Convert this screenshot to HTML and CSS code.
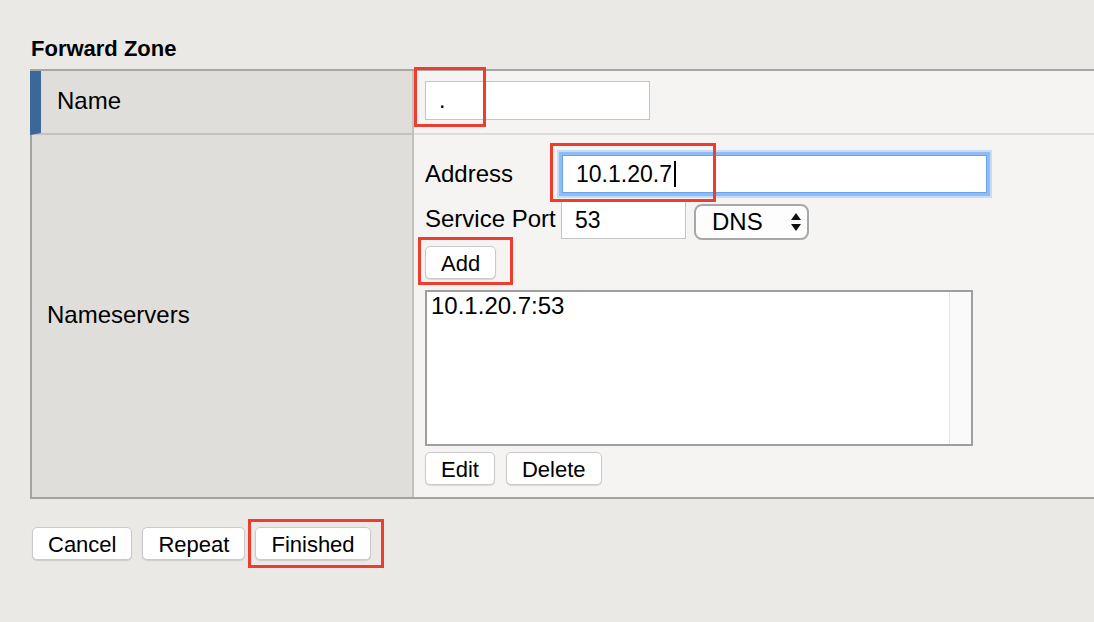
FILE: index.html
```html
<!DOCTYPE html>
<html>
<head>
<meta charset="utf-8">
<link rel="stylesheet" href="styles.css">
</head>
<body>
<div class="page">
  <h2 class="title">Forward Zone</h2>
  <div class="form-table">
    <div class="label-cell name-label">Name</div>
    <div class="value-cell name-value">
      <div class="text-input name-input">.</div>
    </div>
    <div class="label-cell ns-label">Nameservers</div>
    <div class="value-cell ns-value">
      <div class="field-row">
        <span class="field-label">Address</span>
        <div class="text-input addr-input">10.1.20.7<span class="caret"></span></div>
      </div>
      <div class="field-row port-row">
        <span class="field-label port-label">Service Port</span>
        <div class="text-input port-input">53</div>
        <div class="select">
          <span>DNS</span>
          <svg class="arrows" width="10" height="20" viewBox="0 0 10 20"><path d="M5 1 L10 8 L0 8 Z" fill="#111"/><path d="M0 12 L10 12 L5 19 Z" fill="#111"/></svg>
        </div>
      </div>
      <div class="btn-row add-row"><button class="btn">Add</button></div>
      <div class="listbox">
        <div class="list-items"><div class="list-item">10.1.20.7:53</div></div>
        <div class="gutter"></div>
      </div>
      <div class="btn-row edit-row">
        <button class="btn">Edit</button>
        <button class="btn">Delete</button>
      </div>
    </div>
  </div>
  <div class="actions">
    <button class="btn">Cancel</button>
    <button class="btn">Repeat</button>
    <button class="btn">Finished</button>
  </div>

  <div class="mark mark-name"></div>
  <div class="mark mark-addr"></div>
  <div class="mark mark-add"></div>
  <div class="mark mark-finished"></div>
</div>
</body>
</html>
```

FILE: styles.css
```css
html, body {
  margin: 0;
  padding: 0;
  background: #eae9e6;
}
body {
  font-family: "Liberation Sans", Arial, Helvetica, sans-serif;
  color: #000;
}
.page {
  position: relative;
  padding-left: 30px;
  min-height: 622px;
  box-sizing: border-box;
}
.title {
  margin: 0;
  padding-top: 37px;
  height: 32px;
  font-size: 22px;
  line-height: 24px;
  font-weight: bold;
  padding-left: 1px;
}
.form-table {
  display: grid;
  grid-template-columns: 384px 1fr;
  border-top: 2px solid #a6a6a6;
  border-bottom: 2px solid #a3a3a3;
}
.label-cell {
  background: #dfdedb;
  display: flex;
  align-items: center;
  font-size: 24px;
  border-right: 2px solid #c3c2bf;
  box-sizing: border-box;
}
.name-label {
  border-left: 11px solid #3b6899;
  padding-left: 16px;
  padding-bottom: 2px;
  height: 64px;
  border-bottom: 2px solid #c2c1be;
}
.ns-label {
  border-left: 2px solid #a3a3a3;
  padding-left: 15px;
  padding-bottom: 3px;
}
.value-cell {
  background: #f5f4f2;
  padding-left: 11px;
  box-sizing: border-box;
}
.name-value {
  height: 64px;
  border-bottom: 2px solid #dddcd9;
  display: flex;
  align-items: center;
  padding-bottom: 3px;
}
.text-input {
  background: #fff;
  border: 1px solid #c4c4c4;
  box-sizing: border-box;
  font-size: 23px;
  display: flex;
  align-items: center;
  padding-left: 13px;
}
.name-input {
  width: 225px;
  height: 39px;
}
.ns-value {
  padding-top: 20px;
  padding-bottom: 12px;
  display: flex;
  flex-direction: column;
}
.field-row {
  display: flex;
  align-items: center;
}
.field-label {
  width: 136px;
  font-size: 24px;
  flex: none;
}
.port-label {
  margin-top: 4px;
}
.addr-input {
  width: 425px;
  height: 38px;
  margin-left: 1px;
  border: 1px solid #6aa3ec;
  box-shadow: 0 0 0 3px #8dbcf6, 0 0 0 5px #c6dcf8;
}
.caret {
  display: inline-block;
  width: 2px;
  height: 26px;
  background: #000;
  margin-left: 2px;
}
.port-row {
  margin-top: 8px;
  align-items: flex-start;
}
.port-input {
  width: 125px;
  height: 38px;
}
.select {
  margin-left: 8px;
  margin-top: 3px;
  width: 115px;
  height: 36px;
  box-sizing: border-box;
  border: 2px solid #a8a8a8;
  border-radius: 8px;
  background: #fdfdfd;
  display: flex;
  align-items: center;
  justify-content: space-between;
  padding: 0 6px 0 16px;
  font-size: 24px;
}
.arrows {
  display: block;
}
.btn-row {
  display: flex;
  gap: 11px;
}
.add-row {
  margin-top: 6px;
}
.btn {
  font-family: "Liberation Sans", Arial, Helvetica, sans-serif;
  font-size: 22px;
  color: #000;
  background: #fff;
  border: 1px solid #cacaca;
  border-radius: 5px;
  box-shadow: 0 1px 1px rgba(0,0,0,0.12);
  height: 33px;
  padding: 2px 15px 0;
  margin: 0;
  line-height: 29px;
}
.listbox {
  margin-top: 11px;
  width: 548px;
  height: 156px;
  box-sizing: border-box;
  border: 2px solid #9e9e9e;
  background: #fff;
  display: flex;
}
.list-items {
  flex: 1;
  padding: 0 4px;
}
.list-item {
  font-size: 24px;
  line-height: 28px;
}
.gutter {
  width: 21px;
  background: #fafafa;
  border-left: 1px solid #e4e4e4;
}
.edit-row {
  margin-top: 6px;
}
.actions {
  display: flex;
  gap: 10px;
  margin-top: 28px;
  padding-left: 2px;
}
.mark {
  position: absolute;
  border: 3px solid #ef3d2d;
  box-sizing: border-box;
}
.mark-name { left: 414px; top: 67px; width: 72px; height: 60px; }
.mark-addr { left: 550px; top: 143px; width: 166px; height: 59px; }
.mark-add { left: 418px; top: 237px; width: 95px; height: 48px; }
.mark-finished { left: 248px; top: 519px; width: 136px; height: 49px; }
```
